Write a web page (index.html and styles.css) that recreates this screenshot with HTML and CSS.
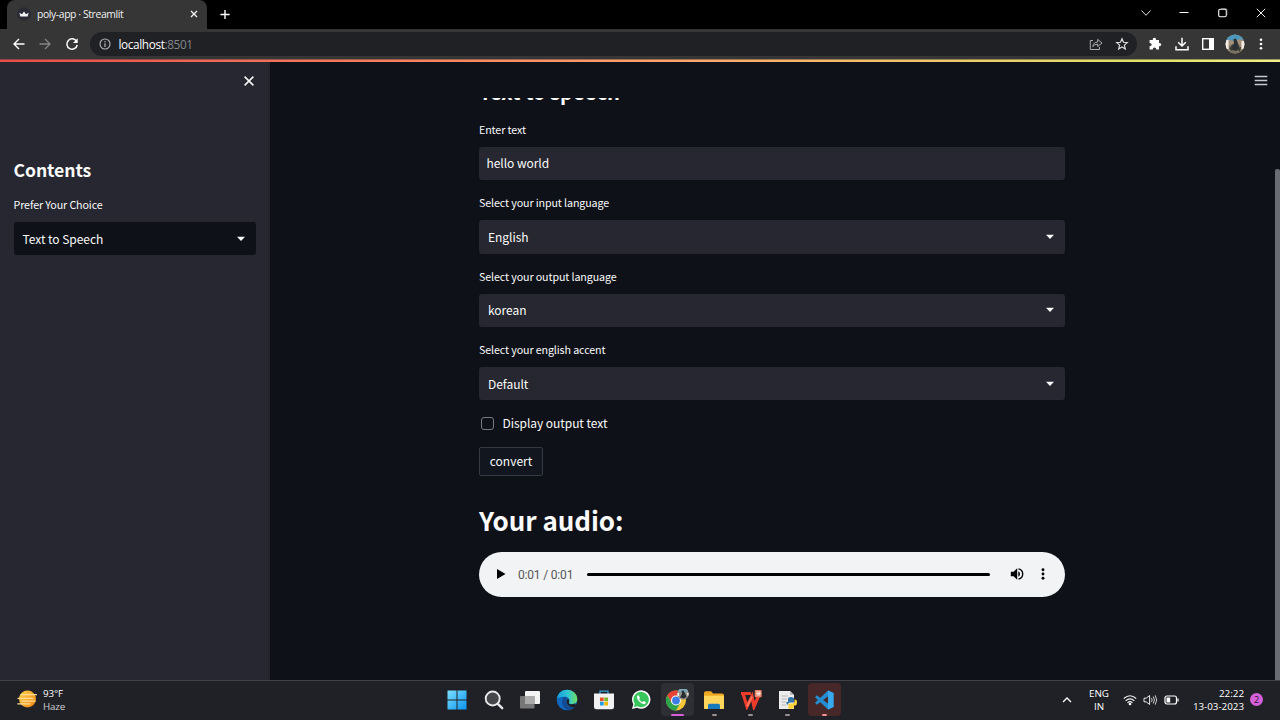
FILE: index.html
```html
<!DOCTYPE html>
<html lang="en">
<head>
<meta charset="utf-8">
<title>poly-app · Streamlit</title>
<link rel="stylesheet" href="styles.css">
</head>
<body>
<div class="screen">
  <div class="titlebar">
    <div class="tab">
      <svg class="favicon" width="14" height="14" viewBox="0 0 14 14"><circle cx="7" cy="7" r="6.7" fill="#292a36"/><path d="M2.4 5.7 5 7.2 7 4.6 9 7.2 11.6 5.7 10.7 9.5H3.3Z" fill="#f2f2f5"/></svg>
      <span class="tab-title">poly-app · Streamlit</span>
      <svg class="tab-close" width="8" height="8" viewBox="0 0 8 8"><path d="M1 1 7 7M7 1 1 7" stroke="#f4f4f4" stroke-width="1.3"/></svg>
    </div>
    <svg class="new-tab" width="12" height="12" viewBox="0 0 12 12"><path d="M6 1V11M1 6H11" stroke="#fff" stroke-width="1.5"/></svg>
    <div class="window-buttons">
      <svg width="12" height="12" viewBox="0 0 12 12"><path d="M1.5 3.5 6 8.3 10.5 3.5" fill="none" stroke="#ddd"/></svg>
      <svg width="12" height="12" viewBox="0 0 12 12"><path d="M1.5 5.5H10.5" stroke="#fff"/></svg>
      <svg width="12" height="12" viewBox="0 0 12 12"><rect x="1.7" y="2.2" width="7.6" height="7.6" rx="1.6" fill="none" stroke="#fff" stroke-width="1.1"/><path d="M4 1.5H8.6Q10 1.5 10 3V8" fill="none" stroke="#aaa" stroke-width=".6"/></svg>
      <svg width="12" height="12" viewBox="0 0 12 12"><path d="M1.8 1.8 10.2 10.2M10.2 1.8 1.8 10.2" stroke="#eee"/></svg>
    </div>
  </div>

  <div class="toolbar">
    <div class="nav">
      <svg width="14" height="14" viewBox="0 0 14 14"><path d="M12.5 7H2M7 2 2 7 7 12" fill="none" stroke="#fff" stroke-width="1.4"/></svg>
      <svg width="14" height="14" viewBox="0 0 14 14"><path d="M1.5 7H12M7 2 12 7 7 12" fill="none" stroke="#858585" stroke-width="1.3"/></svg>
      <svg width="14" height="14" viewBox="0 0 14 14"><path d="M11.6 4.4A5.2 5.2 0 1 0 12.2 8" fill="none" stroke="#fff" stroke-width="1.5"/><path d="M12.7 1.2V6H8Z" fill="#fff"/></svg>
    </div>
    <div class="address">
      <svg width="12" height="12" viewBox="0 0 12 12"><circle cx="6" cy="6" r="5" fill="none" stroke="#b5b7ba" stroke-width="1.1"/><path d="M6 5.3V9M6 3V4.3" stroke="#b5b7ba" stroke-width="1.2"/></svg>
      <span class="url">localhost<span class="port">:8501</span></span>
      <svg class="share" width="14" height="14" viewBox="0 0 14 14"><path d="M4 3.5H1.3V12.5H10.5V10" fill="none" stroke="#a9abad"/><path d="M3.8 9.6Q4.2 5.2 8.7 5V2.4L13 6 8.7 9.5V7.1Q5.5 7 3.8 9.6Z" fill="none" stroke="#a9abad"/></svg>
      <svg width="14" height="14" viewBox="0 0 14 14"><path d="M7 1.8 8.5 5.3 12.3 5.6 9.4 8.1 10.3 11.9 7 9.9 3.7 11.9 4.6 8.1 1.7 5.6 5.5 5.3Z" fill="none" stroke="#ddd" stroke-width="1.2"/></svg>
    </div>
    <div class="tools">
      <svg width="14" height="14" viewBox="0 0 14 14"><path d="M1.6 3H4.7Q4.5 .7 6.4 .7T8.1 3H11V5.9Q13.3 5.8 13.3 7.6T11 9.3V12.6H8.3Q8.2 10.5 6.5 10.5T4.7 12.6H1.6V9.3Q3.7 9.2 3.7 7.6T1.6 6Z" fill="#fff"/></svg>
      <svg width="14" height="14" viewBox="0 0 14 14"><path d="M7 .8V8.6M3.2 5.2 7 9 10.8 5.2M1 9.2V12.7H13V9.2" fill="none" stroke="#fff" stroke-width="1.5"/></svg>
      <svg width="14" height="14" viewBox="0 0 14 14"><rect x="1.7" y="1.7" width="10.6" height="10.6" fill="none" stroke="#fff" stroke-width="1.4"/><path d="M8 1.5H12.5V12.5H8Z" fill="#fff"/></svg>
      <svg width="20" height="20" viewBox="0 0 20 20"><defs><clipPath id="face"><circle cx="10" cy="10" r="9.5"/></clipPath></defs><g clip-path="url(#face)"><rect width="20" height="20" fill="#a3917a"/><path d="M0 0H20V7L15 5 10 7 4 6 0 8Z" fill="#4e97bd"/><path d="M0 6H3.5V15H0ZM16.5 7H20V15H16.5Z" fill="#f3eee6"/><path d="M4 12 9 9 15 11 16 20H5Z" fill="#7c7362"/><path d="M8.5 5 11 4.5 12.5 8 14 13 12 17 7 16 6 12 9 10Z" fill="#2b3135"/><path d="M4 14 8 12 7 17ZM12 14 16 13 15 18Z" fill="#373a36"/></g></svg>
      <svg width="14" height="14" viewBox="0 0 14 14" fill="#fff"><circle cx="7" cy="2.7" r="1.3"/><circle cx="7" cy="7" r="1.3"/><circle cx="7" cy="11.3" r="1.3"/></svg>
    </div>
  </div>
  <div class="decoration"></div>

  <div class="app">
    <aside class="sidebar">
      <div class="sidebar-head">
        <svg width="12" height="12" viewBox="0 0 12 12"><path d="M1.6 1.6 10.4 10.4M10.4 1.6 1.6 10.4" stroke="#fafafa" stroke-width="1.5"/></svg>
      </div>
      <h2 class="sidebar-title">Contents</h2>
      <div class="label label-side">Prefer Your Choice</div>
      <div class="field field-side"><span>Text to Speech</span><svg class="caret" width="10" height="6" viewBox="0 0 10 6"><path d="M1 .8H9L5 5Z" fill="#fafafa"/></svg></div>
    </aside>
    <div class="content">
      <header class="content-head">
        <svg width="14" height="12" viewBox="0 0 14 12"><path d="M.7 1.5H13.3M.7 5.5H13.3M.7 9.5H13.3" stroke="#c9cace" stroke-width="1.6"/></svg>
      </header>
      <main class="main">
        <h3 class="page-title">Text to speech</h3>
        <div class="group"><div class="label">Enter text</div><div class="field text-field"><span>hello world</span></div></div>
        <div class="group"><div class="label">Select your input language</div><div class="field"><span>English</span><svg class="caret" width="10" height="6" viewBox="0 0 10 6"><path d="M1 .8H9L5 5Z" fill="#fafafa"/></svg></div></div>
        <div class="group"><div class="label">Select your output language</div><div class="field"><span>korean</span><svg class="caret" width="10" height="6" viewBox="0 0 10 6"><path d="M1 .8H9L5 5Z" fill="#fafafa"/></svg></div></div>
        <div class="group"><div class="label">Select your english accent</div><div class="field"><span>Default</span><svg class="caret" width="10" height="6" viewBox="0 0 10 6"><path d="M1 .8H9L5 5Z" fill="#fafafa"/></svg></div></div>
        <div class="check"><span class="box"></span><span class="check-text">Display output text</span></div>
        <div class="convert"><span>convert</span></div>
        <h1 class="audio-title">Your audio:</h1>
        <div class="player">
          <svg width="10" height="12" viewBox="0 0 10 12"><path d="M1 1 9.5 6 1 11Z" fill="#000"/></svg>
          <span class="time">0:01 / 0:01</span>
          <span class="track"></span>
          <svg class="volume" width="14" height="14" viewBox="0 0 14 14"><path d="M.8 4.8H3.6L7.2 1.3V12.7L3.6 9.2H.8Z"/><path d="M8.3 4.2Q10 5 10 7T8.3 9.8Z"/><path d="M8.5 1.9A5.2 5.2 0 0 1 8.5 12.1" fill="none" stroke="#000" stroke-width="1.4"/></svg>
          <svg width="4" height="12" viewBox="0 0 4 12"><circle cx="2" cy="1.8" r="1.45"/><circle cx="2" cy="6" r="1.45"/><circle cx="2" cy="10.2" r="1.45"/></svg>
        </div>
      </main>
    </div>
    <div class="scroll"><div class="thumb"></div></div>
  </div>

  <div class="taskbar">
    <div class="weather">
      <svg width="20" height="20" viewBox="0 0 20 20"><defs><linearGradient id="sun" x2="1" y2="1"><stop stop-color="#ffd24c"/><stop offset="1" stop-color="#ef8111"/></linearGradient></defs><circle cx="10.5" cy="10" r="8.5" fill="url(#sun)"/><path d="M4 5.7H19.5M1 9.3H16M5 12.2H18M.8 14.8H13" stroke="#ffdf99" stroke-width="1.3" stroke-linecap="round"/></svg>
      <div class="weather-text"><span class="degrees">93°F</span><span class="haze">Haze</span></div>
    </div>
    <div class="apps">
      <div class="item"><svg width="20" height="20" viewBox="0 0 20 20"><defs><linearGradient id="win" x2="1" y2="1"><stop stop-color="#7de0ff"/><stop offset="1" stop-color="#0a93ee"/></linearGradient></defs><path d="M.5 .5H9.5V9.5H.5ZM10.5 .5H19.5V9.5H10.5ZM.5 10.5H9.5V19.5H.5ZM10.5 10.5H19.5V19.5H10.5Z" fill="url(#win)"/></svg></div>
      <div class="item"><svg width="20" height="20" viewBox="0 0 20 20"><circle cx="8.7" cy="8.5" r="7" fill="#45474b" stroke="#e8e8ea" stroke-width="1.9"/><path d="M13.8 13.8 18.2 18.2" stroke="#e8e8ea" stroke-width="2.4" stroke-linecap="round"/></svg></div>
      <div class="item"><svg width="20" height="20" viewBox="0 0 20 20"><rect x="5" y="1" width="15" height="13" rx="1" fill="#f3f3f3"/><rect x="0" y="6" width="14.5" height="12.5" rx="1" fill="#777"/><rect x="5" y="6" width="9.5" height="8" fill="#aaa"/></svg></div>
      <div class="item"><svg width="22" height="22" viewBox="0 0 22 22"><defs><linearGradient id="edge" x2="1"><stop stop-color="#169ddd"/><stop offset=".55" stop-color="#30c6d4"/><stop offset="1" stop-color="#70df5c"/></linearGradient></defs><circle cx="11" cy="11" r="10.3" fill="#1067be"/><path d="M.8 9.8C2 3.8 6 .7 11 .7 17 .7 21.3 5 21.3 10.2 21.3 13.5 18.7 15.2 15.8 15.2 13.6 15.2 12.5 14.3 13 13.3 14.5 10.3 12.1 7.7 8.8 7.7 5 7.7 1.5 9 .8 9.8Z" fill="url(#edge)"/><path d="M7.9 8.1C4.5 12 6.4 19 11.6 21 15.2 21 18 19.6 20 16.5 16.5 18.5 10.4 17.2 9.8 12.8 9.6 11 10.2 9.5 11.3 8.5 10.2 7.9 9 7.8 7.9 8.1Z" fill="#134b91"/><path d="M13 13.3Q12.5 14.3 13.7 14.9 16 15.6 18.5 14.6L21.5 17.5 17 18.2Q11 17 10.4 13 10.2 10.7 12 9.6 13.8 11.4 13 13.3Z" fill="#202126"/></svg></div>
      <div class="item"><svg width="20" height="20" viewBox="0 0 20 20"><path d="M6 4V1.2H14V4" fill="none" stroke="#35a4dc" stroke-width="1.3"/><path d="M0 3.5H20V17Q20 19.3 17.7 19.3H2.3Q0 19.3 0 17Z" fill="#f2f2f2"/><path d="M6 7.5H9.7V11.2H6Z" fill="#e75124"/><path d="M10.3 7.5H14V11.2H10.3Z" fill="#78b829"/><path d="M6 11.8H9.7V15.5H6Z" fill="#229ee4"/><path d="M10.3 11.8H14V15.5H10.3Z" fill="#f5b900"/></svg></div>
      <div class="item"><svg width="20" height="20" viewBox="0 0 20 20"><path d="M1 19 2.3 14.2A9.2 9.2 0 1 1 6 17.7Z" fill="#fff"/><path d="M2.8 17.2 3.7 13.8A7.7 7.7 0 1 1 6.4 16.3Z" fill="#38c65c"/><path d="M7 5.3C5.2 6.4 6 9.3 8.6 11.8 11.3 14.3 13.8 14.9 14.8 13.1L14.7 12 12.5 11 11.3 12.2Q9.2 11.3 8.2 9.2L8.9 8.2 8 5.7Z" fill="#fff"/></svg></div>
      <div class="item item-chrome"><svg width="24" height="22" viewBox="0 0 24 22"><circle cx="11" cy="11.5" r="10" fill="#fac637"/><path d="M2.3 6.5A10 10 0 0 1 19.7 6.5H11L6.7 14Z" fill="#e84435"/><path d="M2.3 6.5A10 10 0 0 0 11 21.5L15.3 14H6.7Z" fill="#2da64b"/><circle cx="11" cy="11.5" r="5" fill="#fff"/><circle cx="11" cy="11.5" r="3.9" fill="#3e7de8"/><circle cx="18" cy="4.9" r="5.8" fill="#99958b"/><path d="M12.8 2.5Q14.5-.8 18-.9T23.2 2.5L18 4Z" fill="#7ba6b8"/><path d="M12.4 4H14V7H12.8ZM22 4H23.7L23 7.5Z" fill="#fff"/><path d="M16.5 2 18.5 1.5 20 4 21.5 8 19 9.5 15 8.5 17 5Z" fill="#292f33"/></svg><i class="mark mark-pink"></i></div>
      <div class="item"><svg width="20" height="20" viewBox="0 0 20 20"><path d="M0 3Q0 1.2 1.8 1.2H7L9.2 3.5H18Q20 3.5 20 5.5V19H0Z" fill="#efaa24"/><path d="M0 5.8H20V17Q20 19 18 19H2Q0 19 0 17Z" fill="#ffd65c"/><path d="M4 19V15.3Q4 13.8 5.5 13.8H14.5Q16 13.8 16 15.3V19Z" fill="#1979bd"/></svg><i class="mark"></i></div>
      <div class="item"><svg width="22" height="20" viewBox="0 0 22 20"><path d="M1 3.5H11M3 3.5 7 16.5 12 6.5 14 16.5 19 5" fill="none" stroke="#ed3c2c" stroke-width="3.2"/><path d="M7 16.5 12 6.5" stroke="#ff765b" stroke-width="2"/><rect x="14.7" y="0" width="7" height="7.3" rx="1" fill="#e88166"/><path d="M16.3 2H20V5H16.3M16.3 3.5H20" fill="none" stroke="#fff" stroke-width=".8"/></svg><i class="mark"></i></div>
      <div class="item"><svg width="20" height="20" viewBox="0 0 20 20"><path d="M1 1H12L16 5V19H1Z" fill="#ededed"/><path d="M12 1V5H16" fill="#bbb"/><path d="M3.5 6H10M3.5 9H9M3.5 12H8M3.5 15H8" stroke="#b6b6b6"/><path d="M10 12V9Q10 7 13 7T16 9V12.5H12Q9.8 12.5 9.8 15 8 14 8.4 12Z" fill="#3574a8"/><path d="M16.5 9.5Q19.2 9.2 19 12.7T16 15.5V17Q16 19 13 19T10.3 17V15Q10.3 13.4 12 13.4H15Q16.5 13.4 16.5 11Z" fill="#ffd33e"/></svg><i class="mark"></i></div>
      <div class="item item-code"><svg width="20" height="20" viewBox="0 0 20 20"><path d="M14 .5 19.5 3V17L14 19.5 1 7.2 2.8 5.2 14.5 14V6L2.8 14.8 1 12.8Z" fill="#238dd2"/><path d="M14 .5 19.5 3V17L14 19.5Z" fill="#38a9ed"/></svg><i class="mark mark-rose"></i></div>
    </div>
    <div class="tray">
      <svg class="chev" width="10" height="8" viewBox="0 0 10 8"><path d="M1 6 5 2 9 6" fill="none" stroke="#fff" stroke-width="1.3"/></svg>
      <div class="lang"><span>ENG</span><span>IN</span></div>
      <svg class="wifi" width="14" height="12" viewBox="0 0 14 12"><path d="M.8 4.5Q7-1 13.2 4.5M2.6 6.8Q7 2.8 11.4 6.8M4.5 8.8Q7 6.5 9.5 8.8" fill="none" stroke="#eee" stroke-width="1.1"/><circle cx="7" cy="10" r="1.3" fill="#fff"/></svg>
      <svg class="sound" width="15" height="12" viewBox="0 0 15 12"><path d="M1 4.2H3.2L6.6 1.5V10.5L3.2 7.8H1Z" fill="none" stroke="#eee"/><path d="M8.5 4Q9.8 6 8.5 8M10.3 2.5Q12.5 6 10.3 9.5M12.2 1.3Q15.2 6 12.2 10.7" fill="none" stroke="#ccc"/></svg>
      <svg class="battery" width="15" height="10" viewBox="0 0 15 10"><rect x="1" y="1" width="11.5" height="8" rx="2" fill="none" stroke="#fff" stroke-width="1.2"/><path d="M2.5 2.5H6.2V7.5H2.5Z" fill="#fff"/><path d="M14 3.5V6.5" stroke="#fff" stroke-width="1.2"/></svg>
      <div class="clock"><span class="hour">22:22</span><span class="date">13-03-2023</span></div>
      <span class="badge">2</span>
    </div>
  </div>
</div>
</body>
</html>
```

FILE: styles.css
```css
* { box-sizing: border-box; }
body { margin: 0; background: #0e1118; }
svg { display: block; flex: none; }
span { white-space: nowrap; }
h1, h2, h3 { margin: 0; font-weight: 700; color: #fafafa; white-space: nowrap; }

.screen {
  width: 1280px; height: 720px; overflow: hidden;
  display: flex; flex-direction: column;
  font-family: "Noto Sans CJK SC", "Noto Sans", sans-serif;
}

.titlebar { height: 29px; flex: none; background: #000; display: flex; align-items: center; padding-left: 7px; }
.tab {
  width: 200px; height: 29px; background: #363636; border-radius: 8px 8px 0 0;
  display: flex; align-items: center; padding: 0 9.5px 1px 9.5px;
}
.tab-title { font: 10.4px/16px "Open Sans", "Noto Sans", sans-serif; color: #f0f0f0; margin-left: 6.5px; letter-spacing: -.4px; }
.tab-close { margin-left: auto; }
.new-tab { margin-left: 12px; padding-bottom: 1px; }
.window-buttons { margin-left: auto; display: flex; gap: 26.3px; padding: 0 13px 4px 0; }

.toolbar { height: 30px; flex: none; background: #363636; display: flex; align-items: center; padding-bottom: 1px; }
.nav { display: flex; gap: 12.7px; padding-left: 11.5px; width: 90px; flex: none; }
.address {
  width: 1047px; height: 24px; border-radius: 12px; background: #202125;
  display: flex; align-items: center; padding: 0 8px 0 9px;
}
.url { font: 11.8px/18px "Open Sans", "Noto Sans", sans-serif; color: #fff; margin-left: 7.5px; letter-spacing: -.38px; }
.port { color: #85888c; }
.share { margin: 0 12.5px 0 auto; }
.tools { display: flex; align-items: center; gap: 12.6px; margin-left: 11px; }
.tools svg:nth-child(4) { margin: 0 -3px; }
.decoration {
  height: 3px; flex: none; border-top: 1px solid rgba(54, 54, 54, .45);
  background: linear-gradient(90deg, #e64d4b, #ffa06b 50%, #e0e36a 90%, #f3ef87);
  background-origin: border-box;
}

.app { height: 618px; flex: none; display: flex; background: #0e1118; }
.sidebar { width: 269.5px; flex: none; background: #262730; padding: 0 13.5px; border-right: 2px solid #23242d; }
.sidebar-head { height: 95px; display: flex; justify-content: flex-end; padding: 13px 1px 0 0; margin-right: -2px; }
.sidebar-title { font-size: 17.6px; line-height: 26px; letter-spacing: -.08px; }
.label { font-size: 10.7px; line-height: 20px; height: 20px; color: #fafafa; white-space: nowrap; letter-spacing: -.11px; }
.label-side { margin: 12px 0 7px; }
.field {
  height: 33.3px; border-radius: 3px; background: #262730; color: #fafafa;
  display: flex; align-items: center; justify-content: space-between;
  padding: 0 10.5px 0 9px; font-size: 12px; line-height: 20px; letter-spacing: -.04px;
}
.text-field { padding: 0 10px 1px 7.5px; }
.field-side { background: #0e1118; width: 242.5px; }

.content { flex: 1; display: flex; flex-direction: column; min-width: 0; }
.content-head { height: 36px; flex: none; display: flex; justify-content: flex-end; padding: 13px 7.5px 0 0; }
.main { flex: 1; overflow: hidden; padding-left: 209.5px; }
.page-title { font-size: 20.1px; line-height: 30px; margin: -21px 0 13px; }
.group { width: 586.3px; margin-bottom: 13.1px; }
.group .label { margin-bottom: 7px; }
.check { height: 20px; display: flex; align-items: center; padding-left: 2px; }
.box { width: 13px; height: 13px; border: 1.4px solid #777a81; border-radius: 3px; }
.check-text { color: #fafafa; font-size: 12px; line-height: 20px; margin: 0 0 1px 8.5px; letter-spacing: -.05px; }
.convert {
  width: 64px; height: 29px; margin-top: 13px; border: 1px solid #363941; border-radius: 2px;
  background: #11161f; color: #fafafa; font-size: 12px; line-height: 20px;
  display: flex; align-items: center; justify-content: center;
}
.audio-title { font-size: 26px; line-height: 40px; margin: 24px 0 12px; letter-spacing: -.04px; }
.player {
  width: 586.3px; height: 45.5px; border-radius: 23px; background: #f1f3f4;
  display: flex; align-items: center; padding: 0 20px 0 17px;
}
.time { font: 12px/16px Roboto, sans-serif; color: #555; margin-left: 12px; width: 56px; letter-spacing: -.18px; padding-top: 1px; }
.track { height: 3px; border-radius: 2px; background: #000; width: 403px; margin-left: 13px; }
.volume { margin: 0 17.5px 0 auto; }
.scroll { width: 5px; flex: none; padding-top: 107px; }
.thumb { height: 511px; background: #6a6c71; border-radius: 2px 2px 0 0; }

.taskbar {
  height: 40px; flex: none; background: #202126; border-top: 1px solid #414247;
  display: flex; align-items: stretch; justify-content: space-between;
  font-family: "Open Sans", "Noto Sans", sans-serif; color: #fff;
}
.weather { width: 437px; display: flex; align-items: center; padding: 0 0 3px 17px; }
.weather-text { display: flex; flex-direction: column; font-size: 9.8px; line-height: 13px; margin: 1px 0 0 6px; letter-spacing: -.15px; }
.haze { color: #cfcfd2; }
.apps { display: grid; grid-template-columns: repeat(11, 33px); column-gap: 3.75px; padding: 2px 0 4px 3.3px; width: 407px; }
.item { position: relative; display: flex; align-items: center; justify-content: center; border-radius: 4px; }
.item-chrome { background: #2e2f34; }
.item-code { background: #482728; }
.mark { position: absolute; bottom: 0; left: 14px; width: 5px; height: 2px; border-radius: 1px; background: #97908e; }
.mark-pink { left: 10px; width: 13px; background: #d65fdb; }
.mark-rose { background: #f29292; }
.tray { flex: 1; display: flex; align-items: center; font-size: 9.8px; line-height: 13px; padding: 0 17px 2px 0; justify-content: flex-end; }
.lang { width: 24px; display: flex; flex-direction: column; align-items: center; margin: 0 12px 0 15px; }
.sound { margin: 0 6px 0 6px; }
.clock { width: 60px; display: flex; flex-direction: column; align-items: flex-end; margin-left: 5px; }
.badge { width: 13px; height: 13px; border-radius: 50%; background: #d65fdb; color: #281429; font-size: 9px; line-height: 13px; text-align: center; margin-left: 6px; }
```
